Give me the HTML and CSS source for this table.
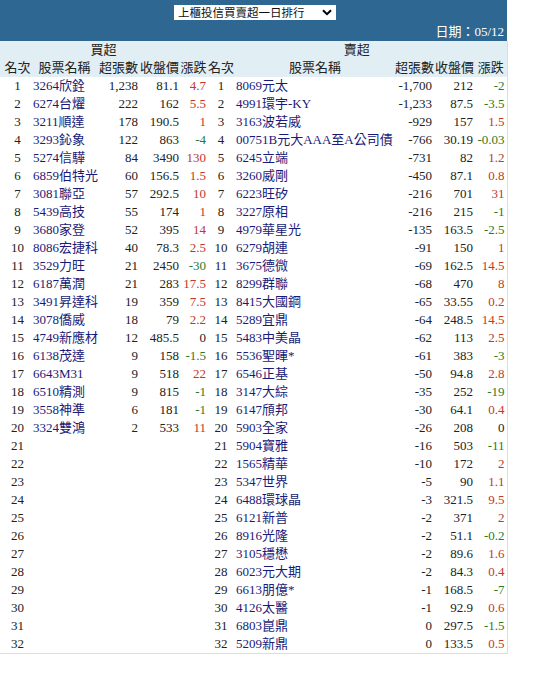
FILE: index.html
```html
<!DOCTYPE html>
<html lang="zh-Hant">
<head>
<meta charset="utf-8">
<title>上櫃投信買賣超一日排行</title>
<link rel="stylesheet" href="styles.css">
</head>
<body>
<div class="page">
  <div class="top">
    <div class="sel-row">
      <span class="sel">
        <span class="sel-text">上櫃投信買賣超一日排行</span>
        <svg class="chev" width="10" height="7" viewBox="0 0 10 7"><path d="M1 1.2 L5 5.2 L9 1.2" fill="none" stroke="#000" stroke-width="2"/></svg>
      </span>
    </div>
    <div class="date">日期：05/12</div>
  </div>
  <table class="rank">
    <colgroup>
      <col class="c-no"><col class="c-name"><col class="c-vol"><col class="c-px"><col class="c-chg">
      <col class="c-no2"><col class="c-name2"><col class="c-vol2"><col class="c-px2"><col class="c-chg2">
    </colgroup>
    <thead>
      <tr class="grp"><th colspan="5">買超</th><th colspan="5">賣超</th></tr>
      <tr class="cols"><th class="first">名次</th><th>股票名稱</th><th>超張數</th><th>收盤價</th><th>漲跌</th><th>名次</th><th>股票名稱</th><th>超張數</th><th>收盤價</th><th>漲跌</th></tr>
    </thead>
    <tbody>
      <tr><td class="no">1</td><td class="nm">3264欣銓</td><td class="num">1,238</td><td class="num">81.1</td><td class="chg up">4.7</td><td class="no">1</td><td class="nm">8069元太</td><td class="num r">-1,700</td><td class="num r">212</td><td class="chg r dn">-2</td></tr>
      <tr><td class="no">2</td><td class="nm">6274台燿</td><td class="num">222</td><td class="num">162</td><td class="chg up">5.5</td><td class="no">2</td><td class="nm">4991環宇-KY</td><td class="num r">-1,233</td><td class="num r">87.5</td><td class="chg r dn">-3.5</td></tr>
      <tr><td class="no">3</td><td class="nm">3211順達</td><td class="num">178</td><td class="num">190.5</td><td class="chg up">1</td><td class="no">3</td><td class="nm">3163波若威</td><td class="num r">-929</td><td class="num r">157</td><td class="chg r up">1.5</td></tr>
      <tr><td class="no">4</td><td class="nm">3293鈊象</td><td class="num">122</td><td class="num">863</td><td class="chg dn">-4</td><td class="no">4</td><td class="nm">00751B元大AAA至A公司債</td><td class="num r">-766</td><td class="num r">30.19</td><td class="chg r dn">-0.03</td></tr>
      <tr><td class="no">5</td><td class="nm">5274信驊</td><td class="num">84</td><td class="num">3490</td><td class="chg up">130</td><td class="no">5</td><td class="nm">6245立端</td><td class="num r">-731</td><td class="num r">82</td><td class="chg r up">1.2</td></tr>
      <tr><td class="no">6</td><td class="nm">6859伯特光</td><td class="num">60</td><td class="num">156.5</td><td class="chg up">1.5</td><td class="no">6</td><td class="nm">3260威剛</td><td class="num r">-450</td><td class="num r">87.1</td><td class="chg r up">0.8</td></tr>
      <tr><td class="no">7</td><td class="nm">3081聯亞</td><td class="num">57</td><td class="num">292.5</td><td class="chg up">10</td><td class="no">7</td><td class="nm">6223旺矽</td><td class="num r">-216</td><td class="num r">701</td><td class="chg r up">31</td></tr>
      <tr><td class="no">8</td><td class="nm">5439高技</td><td class="num">55</td><td class="num">174</td><td class="chg up">1</td><td class="no">8</td><td class="nm">3227原相</td><td class="num r">-216</td><td class="num r">215</td><td class="chg r dn">-1</td></tr>
      <tr><td class="no">9</td><td class="nm">3680家登</td><td class="num">52</td><td class="num">395</td><td class="chg up">14</td><td class="no">9</td><td class="nm">4979華星光</td><td class="num r">-135</td><td class="num r">163.5</td><td class="chg r dn">-2.5</td></tr>
      <tr><td class="no">10</td><td class="nm">8086宏捷科</td><td class="num">40</td><td class="num">78.3</td><td class="chg up">2.5</td><td class="no">10</td><td class="nm">6279胡連</td><td class="num r">-91</td><td class="num r">150</td><td class="chg r up">1</td></tr>
      <tr><td class="no">11</td><td class="nm">3529力旺</td><td class="num">21</td><td class="num">2450</td><td class="chg dn">-30</td><td class="no">11</td><td class="nm">3675德微</td><td class="num r">-69</td><td class="num r">162.5</td><td class="chg r up">14.5</td></tr>
      <tr><td class="no">12</td><td class="nm">6187萬潤</td><td class="num">21</td><td class="num">283</td><td class="chg up">17.5</td><td class="no">12</td><td class="nm">8299群聯</td><td class="num r">-68</td><td class="num r">470</td><td class="chg r up">8</td></tr>
      <tr><td class="no">13</td><td class="nm">3491昇達科</td><td class="num">19</td><td class="num">359</td><td class="chg up">7.5</td><td class="no">13</td><td class="nm">8415大國鋼</td><td class="num r">-65</td><td class="num r">33.55</td><td class="chg r up">0.2</td></tr>
      <tr><td class="no">14</td><td class="nm">3078僑威</td><td class="num">18</td><td class="num">79</td><td class="chg up">2.2</td><td class="no">14</td><td class="nm">5289宜鼎</td><td class="num r">-64</td><td class="num r">248.5</td><td class="chg r up">14.5</td></tr>
      <tr><td class="no">15</td><td class="nm">4749新應材</td><td class="num">12</td><td class="num">485.5</td><td class="chg">0</td><td class="no">15</td><td class="nm">5483中美晶</td><td class="num r">-62</td><td class="num r">113</td><td class="chg r up">2.5</td></tr>
      <tr><td class="no">16</td><td class="nm">6138茂達</td><td class="num">9</td><td class="num">158</td><td class="chg dn">-1.5</td><td class="no">16</td><td class="nm">5536聖暉*</td><td class="num r">-61</td><td class="num r">383</td><td class="chg r dn">-3</td></tr>
      <tr><td class="no">17</td><td class="nm">6643M31</td><td class="num">9</td><td class="num">518</td><td class="chg up">22</td><td class="no">17</td><td class="nm">6546正基</td><td class="num r">-50</td><td class="num r">94.8</td><td class="chg r up">2.8</td></tr>
      <tr><td class="no">18</td><td class="nm">6510精測</td><td class="num">9</td><td class="num">815</td><td class="chg dn">-1</td><td class="no">18</td><td class="nm">3147大綜</td><td class="num r">-35</td><td class="num r">252</td><td class="chg r dn">-19</td></tr>
      <tr><td class="no">19</td><td class="nm">3558神準</td><td class="num">6</td><td class="num">181</td><td class="chg dn">-1</td><td class="no">19</td><td class="nm">6147頎邦</td><td class="num r">-30</td><td class="num r">64.1</td><td class="chg r up">0.4</td></tr>
      <tr><td class="no">20</td><td class="nm">3324雙鴻</td><td class="num">2</td><td class="num">533</td><td class="chg up">11</td><td class="no">20</td><td class="nm">5903全家</td><td class="num r">-26</td><td class="num r">208</td><td class="chg r">0</td></tr>
      <tr><td class="no">21</td><td class="nm"></td><td class="num"></td><td class="num"></td><td class="chg"></td><td class="no">21</td><td class="nm">5904寶雅</td><td class="num r">-16</td><td class="num r">503</td><td class="chg r dn">-11</td></tr>
      <tr><td class="no">22</td><td class="nm"></td><td class="num"></td><td class="num"></td><td class="chg"></td><td class="no">22</td><td class="nm">1565精華</td><td class="num r">-10</td><td class="num r">172</td><td class="chg r up">2</td></tr>
      <tr><td class="no">23</td><td class="nm"></td><td class="num"></td><td class="num"></td><td class="chg"></td><td class="no">23</td><td class="nm">5347世界</td><td class="num r">-5</td><td class="num r">90</td><td class="chg r up">1.1</td></tr>
      <tr><td class="no">24</td><td class="nm"></td><td class="num"></td><td class="num"></td><td class="chg"></td><td class="no">24</td><td class="nm">6488環球晶</td><td class="num r">-3</td><td class="num r">321.5</td><td class="chg r up">9.5</td></tr>
      <tr><td class="no">25</td><td class="nm"></td><td class="num"></td><td class="num"></td><td class="chg"></td><td class="no">25</td><td class="nm">6121新普</td><td class="num r">-2</td><td class="num r">371</td><td class="chg r up">2</td></tr>
      <tr><td class="no">26</td><td class="nm"></td><td class="num"></td><td class="num"></td><td class="chg"></td><td class="no">26</td><td class="nm">8916光隆</td><td class="num r">-2</td><td class="num r">51.1</td><td class="chg r dn">-0.2</td></tr>
      <tr><td class="no">27</td><td class="nm"></td><td class="num"></td><td class="num"></td><td class="chg"></td><td class="no">27</td><td class="nm">3105穩懋</td><td class="num r">-2</td><td class="num r">89.6</td><td class="chg r up">1.6</td></tr>
      <tr><td class="no">28</td><td class="nm"></td><td class="num"></td><td class="num"></td><td class="chg"></td><td class="no">28</td><td class="nm">6023元大期</td><td class="num r">-2</td><td class="num r">84.3</td><td class="chg r up">0.4</td></tr>
      <tr><td class="no">29</td><td class="nm"></td><td class="num"></td><td class="num"></td><td class="chg"></td><td class="no">29</td><td class="nm">6613朋億*</td><td class="num r">-1</td><td class="num r">168.5</td><td class="chg r dn">-7</td></tr>
      <tr><td class="no">30</td><td class="nm"></td><td class="num"></td><td class="num"></td><td class="chg"></td><td class="no">30</td><td class="nm">4126太醫</td><td class="num r">-1</td><td class="num r">92.9</td><td class="chg r up">0.6</td></tr>
      <tr><td class="no">31</td><td class="nm"></td><td class="num"></td><td class="num"></td><td class="chg"></td><td class="no">31</td><td class="nm">6803崑鼎</td><td class="num r">0</td><td class="num r">297.5</td><td class="chg r dn">-1.5</td></tr>
      <tr><td class="no">32</td><td class="nm"></td><td class="num"></td><td class="num"></td><td class="chg"></td><td class="no">32</td><td class="nm">5209新鼎</td><td class="num r">0</td><td class="num r">133.5</td><td class="chg r up">0.5</td></tr>
    </tbody>
  </table>
</div>
</body>
</html>
```
FILE: styles.css
```css
html, body {
  margin: 0;
  padding: 0;
  background: #ffffff;
}
body {
  font-family: "Liberation Serif", "Noto Sans CJK TC", serif;
  font-size: 13px;
  color: #222222;
}
.page {
  width: 507px;
}
.top {
  background: #2d6792;
  height: 41px;
  display: flex;
  flex-direction: column;
}
.sel-row {
  display: flex;
  justify-content: center;
  padding-top: 5px;
  padding-left: 3px;
}
.sel {
  display: flex;
  align-items: center;
  justify-content: space-between;
  width: 162px;
  height: 15px;
  background: #ffffff;
  box-sizing: border-box;
  padding: 0 4px 0 4px;
  font-family: "Noto Sans CJK TC", sans-serif;
  font-size: 11.5px;
  line-height: 15px;
  color: #111111;
}
.sel-text {
  white-space: nowrap;
}
.chev {
  flex: none;
}
.date {
  color: #ffffff;
  text-align: right;
  padding-right: 3px;
  margin-top: 3px;
  line-height: 17px;
  font-size: 13px;
}
.rank {
  width: 507px;
  table-layout: fixed;
  border-collapse: collapse;
  border-right: 1px solid #cfe1ea;
  border-bottom: 1px solid #cfe1ea;
}
.c-no { width: 31px; }
.c-name { width: 67px; }
.c-vol { width: 41px; }
.c-px { width: 41px; }
.c-chg { width: 27px; }
.c-no2 { width: 28px; }
.c-name2 { width: 160px; }
.c-vol2 { width: 39px; }
.c-px2 { width: 41px; }
.c-chg2 { width: 32px; }
.rank thead {
  background: #e1eef4;
}
.rank th {
  font-weight: normal;
  height: 18px;
  line-height: 18px;
  padding: 0;
  text-align: center;
  white-space: nowrap;
  color: #222222;
}
.rank th.first {
  padding-left: 4px;
}
.rank td {
  height: 18px;
  line-height: 18px;
  padding: 0;
  white-space: nowrap;
  overflow: hidden;
}
.rank td.no {
  text-align: center;
}
.rank tr td:first-child {
  padding-left: 4px;
}
.rank td.nm {
  text-align: left;
  padding-left: 1px;
  color: #1a1a78;
}
.rank tr td:nth-child(2) {
  padding-left: 2px;
}
.rank td.num,
.rank td.chg {
  text-align: right;
  padding-right: 1px;
}
.rank td.r {
  padding-right: 2px;
}
.up {
  color: #c0392b;
}
.dn {
  color: #2f7a1f;
}
```
